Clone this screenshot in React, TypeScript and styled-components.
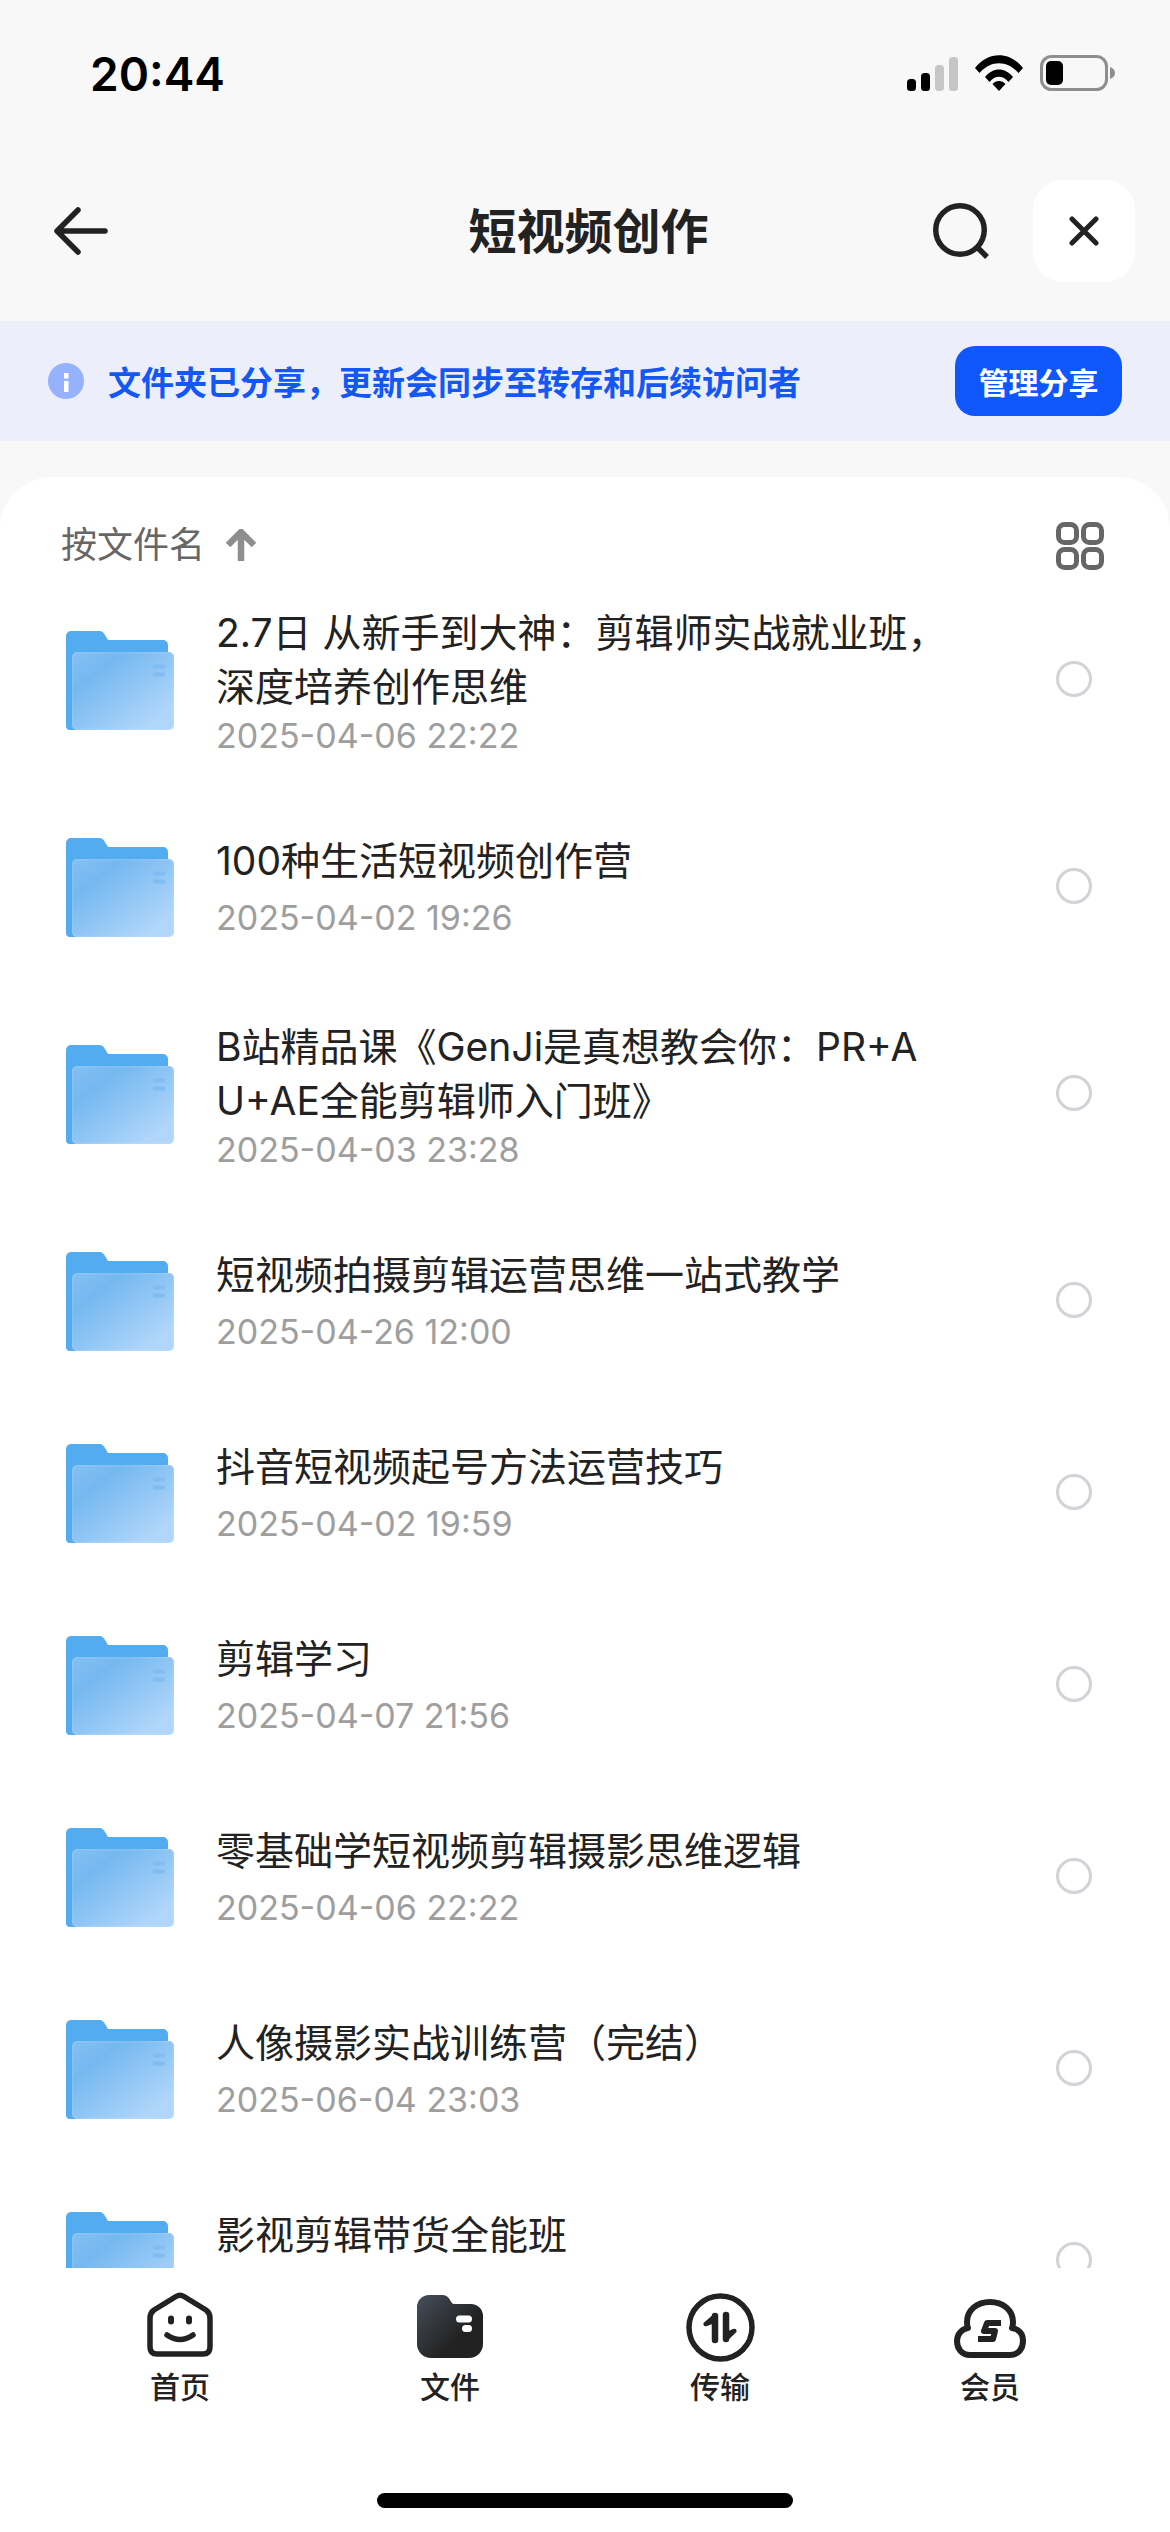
import React from "react";
import styled, { createGlobalStyle } from "styled-components";

const Global = createGlobalStyle`
  html, body { margin: 0; padding: 0; background: #f8f8f8; }
  * { box-sizing: border-box; }
`;
const SANS = `"Inter", "Noto Sans CJK SC", sans-serif`;

const Page = styled.div`
  width: 1170px; height: 2532px; overflow: hidden; background: #f8f8f8;
  display: flex; flex-direction: column; font-family: ${SANS};
`;
const StatusBar = styled.div`
  height: 150px; flex: none; display: flex; justify-content: space-between;
  padding: 46px 55px 0 90px; align-items: flex-start;
`;
const StatusIcons = styled.div`display: flex; gap: 17px; align-items: flex-end; padding-top: 9px;`;
const Clock = styled.div`font-size: 46px; font-weight: 600; line-height: 56px; color: #000;`;
const Header = styled.div`
  height: 171px; flex: none; display: grid; grid-template-columns: 1fr auto 1fr;
  align-items: flex-start; padding: 30px 35px 0 42px;
`;
const Title = styled.h1`
  margin: 0; font-size: 48px; font-weight: 700; color: #222; line-height: 72px; padding-top: 16px;
`;
const HeaderRight = styled.div`display: flex; justify-content: flex-end; align-items: center; gap: 44px;`;
const BackWrap = styled.div`padding: 27px 0 0 12px; line-height: 0;`;
const CloseBtn = styled.div`
  width: 102px; height: 102px; border-radius: 30px; background: #fff;
  display: flex; align-items: center; justify-content: center;
`;
const Banner = styled.div`
  height: 120px; flex: none; background: #eceef9; display: flex; align-items: center;
  padding: 0 48px;
`;
const BannerText = styled.div`
  font-size: 33px; font-weight: 600; color: #1357f5; margin: 4px 0 0 24px; flex: 1; line-height: 50px;
`;
const ManageBtn = styled.div`
  width: 167px; height: 70px; border-radius: 20px; background: #0f57fb; color: #fff;
  font-size: 30px; font-weight: 700; display: flex; align-items: center; justify-content: center;
`;
const Card = styled.div`
  margin-top: 36px; height: 1791px; flex: none; background: #fff;
  border-radius: 52px 52px 0 0; display: flex; flex-direction: column; overflow: hidden;
`;
const SortBar = styled.div`
  height: 92px; flex: none; display: flex; align-items: flex-start; justify-content: space-between;
  padding: 45px 66px 0 61px; position: relative; z-index: 1;
`;
const SortLabel = styled.div`
  display: flex; align-items: center; gap: 21px; font-size: 36px; color: #666; line-height: 40px; margin-top: 3px;
`;
const List = styled.div`flex: 1; overflow: hidden;`;
const Row = styled.div<{ $double?: boolean }>`
  height: ${(p) => (p.$double ? 222 : 192)}px; display: flex; align-items: center; padding: 0 78px 0 66px;
`;
const RowText = styled.div<{ $double?: boolean }>`
  flex: 1; margin-left: 42px; min-width: 0; padding-top: ${(p) => (p.$double ? 4 : 0)}px;
`;
const Name = styled.div`
  font-size: 39px; line-height: 53.5px; color: #222; white-space: pre-line;
`;
const DateText = styled.div<{ $double?: boolean }>`
  font-size: 34px; line-height: 44px; min-height: 44px; color: #9e9e9e; margin-top: ${(p) => (p.$double ? 1 : 8)}px;
`;
const Radio = styled.div`
  width: 36px; height: 36px; border-radius: 50%; border: 3px solid #d2d2d8; flex: none; margin-top: -2px;
`;
const TabBar = styled.div`
  flex: 1; background: #fff; position: relative; display: grid;
  grid-template-columns: repeat(4, 270px); padding: 18px 45px 0; align-content: start;
`;
const Tab = styled.div`display: flex; flex-direction: column; align-items: center;`;
const TabIcon = styled.div<{ $lift: number }>`
  height: 76px; display: flex; align-items: flex-end; justify-content: center; line-height: 0;
  padding-bottom: ${(p) => p.$lift}px;
`;
const TabLabel = styled.div`font-size: 30px; font-weight: 500; color: #222; line-height: 38px; margin-top: 6px;`;
const HomeIndicator = styled.div`
  position: absolute; left: 377px; top: 225px; width: 416px; height: 15px;
  border-radius: 8px; background: #000;
`;
const FolderSvg = styled.svg`flex: none;`;

const Signal = () => (
  <svg width="51" height="34" viewBox="0 0 51 34">
    <rect x="0" y="22" width="9" height="12" rx="3.5" fill="#000" />
    <rect x="14" y="16" width="9" height="18" rx="3.5" fill="#000" />
    <rect x="28" y="8" width="9" height="26" rx="3.5" fill="#c6c6c6" />
    <rect x="42" y="0" width="9" height="34" rx="3.5" fill="#c6c6c6" />
  </svg>
);
const Wifi = () => (
  <svg width="48" height="36" viewBox="0 0 48 36">
    <path d="M0 13 C13 -4 35 -4 48 13 L43.5 18 C32 5 16 5 4.5 18Z" fill="#000" />
    <path d="M10 22 C18 12 30 12 38 22 L33.5 27 C28 20 20 20 14.5 27Z" fill="#000" />
    <path d="M17.5 29 C21 25 27 25 30.5 29 L24 36Z" fill="#000" />
  </svg>
);
const Battery = () => (
  <svg width="75" height="36" viewBox="0 0 75 36">
    <rect x="1.5" y="1.5" width="65" height="33" rx="10" fill="none" stroke="#8e8e8e" strokeWidth="3" />
    <rect x="6" y="6" width="17" height="24" rx="5" fill="#000" />
    <path d="M70 12 C73 13 75 15 75 18 C75 21 73 23 70 24Z" fill="#8e8e8e" />
  </svg>
);
const Back = () => (
  <svg width="54" height="48" viewBox="0 0 54 48" fill="none" stroke="#222" strokeWidth="5.5" strokeLinecap="round" strokeLinejoin="round">
    <path d="M51 24H4M24 3L3 24l21 21" />
  </svg>
);
const Search = () => (
  <svg width="56" height="56" viewBox="0 0 56 56" fill="none" stroke="#222" strokeWidth="5.5">
    <circle cx="27" cy="27" r="24.25" />
    <path d="M45 45l9 9" />
  </svg>
);
const Close = () => (
  <svg width="30" height="30" viewBox="0 0 30 30" fill="none" stroke="#222" strokeWidth="5" strokeLinecap="round">
    <path d="M3 3l24 24M27 3L3 27" />
  </svg>
);
const Info = () => (
  <svg width="36" height="36" viewBox="0 0 36 36">
    <circle cx="18" cy="18" r="18" fill="#96b2fc" />
    <rect x="16" y="10" width="4.5" height="5.5" fill="#fff" />
    <rect x="16" y="18" width="4.5" height="11" fill="#fff" />
  </svg>
);
const SortArrow = () => (
  <svg width="30" height="32" viewBox="0 0 30 32" fill="none" stroke="#8e8e8e" strokeWidth="6.5">
    <path d="M15 32V4M2 16L15 3l13 13" />
  </svg>
);
const GridIcon = () => (
  <svg width="48" height="48" viewBox="0 0 48 48" fill="none" stroke="#666" strokeWidth="5">
    <rect x="2.5" y="2.5" width="18" height="18" rx="6" />
    <rect x="27.5" y="2.5" width="18" height="18" rx="6" />
    <rect x="2.5" y="27.5" width="18" height="18" rx="6" />
    <rect x="27.5" y="27.5" width="18" height="18" rx="6" />
  </svg>
);
const Folder = ({ id }: { id: number }) => (
  <FolderSvg width="108" height="99" viewBox="0 0 108 99">
    <defs>
      <linearGradient id={`f${id}`} x1="0" y1="0" x2="1" y2="1">
        <stop offset="0" stopColor="#84c0f3" />
        <stop offset="0.25" stopColor="#75b8f0" />
        <stop offset="0.85" stopColor="#b0d6fa" />
      </linearGradient>
    </defs>
    <path d="M0 5a5 5 0 0 1 5-5h29a5 5 0 0 1 4 2.5L42 9h55a5 5 0 0 1 5 5V30H10V99H4a4 4 0 0 1-4-4Z" fill="#53abf0" />
    <rect x="6" y="21" width="102" height="78" rx="5" fill={`url(#f${id})`} />
    <rect x="6.75" y="21.75" width="100.5" height="76.5" rx="4.5" fill="none" stroke="#fff" strokeOpacity="0.1" strokeWidth="1.5" />
    <rect x="87" y="33.5" width="12" height="4" rx="1.5" fill="#7fbdf3" />
    <rect x="87" y="41.5" width="12" height="4" rx="1.5" fill="#7fbdf3" />
  </FolderSvg>
);
const HomeTab = () => (
  <svg width="66" height="65" viewBox="0 0 66 65" fill="none" stroke="#222" strokeWidth="5.5" strokeLinecap="round" strokeLinejoin="round">
    <path d="M29 4.5Q33 2 37 4.5L59 18Q63 21 63 26V55Q63 62 56 62H10Q3 62 3 55V26Q3 21 7 18Z" />
    <path d="M24 26.5v3M42 26.5v3" strokeWidth="6" />
    <path d="M20 43Q33 52 46 43" />
  </svg>
);
const FileTab = () => (
  <svg width="66" height="63" viewBox="0 0 66 63">
    <defs>
      <linearGradient id="ft" x1="0" y1="0" x2="0.7" y2="0.6">
        <stop offset="0.1" stopColor="#424a54" />
        <stop offset="1" stopColor="#222" />
      </linearGradient>
    </defs>
    <path d="M0 12A12 12 0 0 1 12 0h14a9 9 0 0 1 7 5l2 3a3 3 0 0 0 3 1h16a12 12 0 0 1 12 12V49a14 14 0 0 1-14 14H14A14 14 0 0 1 0 49Z" fill="url(#ft)" />
    <rect x="39" y="20.5" width="16" height="7" rx="3.5" fill="#fff" />
    <rect x="45" y="30" width="10" height="7" rx="3.5" fill="#fff" />
  </svg>
);
const TransferTab = () => (
  <svg width="69" height="69" viewBox="0 0 69 69" fill="none">
    <circle cx="34.5" cy="34.5" r="31.5" stroke="#222" strokeWidth="5.5" />
    <path d="M29 23V47M40 22V46" stroke="#222" strokeWidth="6.5" strokeLinecap="round" />
    <path d="M29 20L17.5 30Q17 34 21 33L29 30Z" fill="#222" />
    <path d="M40 49L50.5 39Q51 35 47 36L40 39Z" fill="#222" />
  </svg>
);
const VipTab = () => (
  <svg width="72" height="59" viewBox="0 0 72 59" fill="none" stroke="#222" strokeWidth="6" strokeLinejoin="round">
    <path d="M17 56H16C8 56 3 50 3 42c0-7 5-12 11-13-1-2-1-4-1-6C13 11 23 3 36 3s23 8 23 20c0 2 0 4-1 6 7 1 11 6 11 13 0 8-5 14-13 14Z" />
    <path d="M47 24H33l-3 8h11l-2 8H24" />
  </svg>
);

const rows: { name: string; date: string; double?: boolean }[] = [
  { name: "2.7日 从新手到大神：剪辑师实战就业班，\n深度培养创作思维", date: "2025-04-06 22:22", double: true },
  { name: "100种生活短视频创作营", date: "2025-04-02 19:26" },
  { name: "B站精品课《GenJi是真想教会你：PR+A\nU+AE全能剪辑师入门班》", date: "2025-04-03 23:28", double: true },
  { name: "短视频拍摄剪辑运营思维一站式教学", date: "2025-04-26 12:00" },
  { name: "抖音短视频起号方法运营技巧", date: "2025-04-02 19:59" },
  { name: "剪辑学习", date: "2025-04-07 21:56" },
  { name: "零基础学短视频剪辑摄影思维逻辑", date: "2025-04-06 22:22" },
  { name: "人像摄影实战训练营（完结）", date: "2025-06-04 23:03" },
  { name: "影视剪辑带货全能班", date: "" },
];

export default function App() {
  return (
    <Page>
      <Global />
      <StatusBar>
        <Clock>20:44</Clock>
        <StatusIcons>
          <Signal />
          <Wifi />
          <Battery />
        </StatusIcons>
      </StatusBar>
      <Header>
        <BackWrap><Back /></BackWrap>
        <Title>短视频创作</Title>
        <HeaderRight>
          <Search />
          <CloseBtn><Close /></CloseBtn>
        </HeaderRight>
      </Header>
      <Banner>
        <Info />
        <BannerText>文件夹已分享，更新会同步至转存和后续访问者</BannerText>
        <ManageBtn>管理分享</ManageBtn>
      </Banner>
      <Card>
        <SortBar>
          <SortLabel>按文件名<SortArrow /></SortLabel>
          <GridIcon />
        </SortBar>
        <List>
          {rows.map((r, i) => (
            <Row key={i} $double={r.double}>
              <Folder id={i} />
              <RowText $double={r.double}>
                <Name>{r.name}</Name>
                <DateText $double={r.double}>{r.date}</DateText>
              </RowText>
              <Radio />
            </Row>
          ))}
        </List>
      </Card>
      <TabBar>
        <Tab><TabIcon $lift={5}><HomeTab /></TabIcon><TabLabel>首页</TabLabel></Tab>
        <Tab><TabIcon $lift={4}><FileTab /></TabIcon><TabLabel>文件</TabLabel></Tab>
        <Tab><TabIcon $lift={0}><TransferTab /></TabIcon><TabLabel>传输</TabLabel></Tab>
        <Tab><TabIcon $lift={4}><VipTab /></TabIcon><TabLabel>会员</TabLabel></Tab>
        <HomeIndicator />
      </TabBar>
    </Page>
  );
}
